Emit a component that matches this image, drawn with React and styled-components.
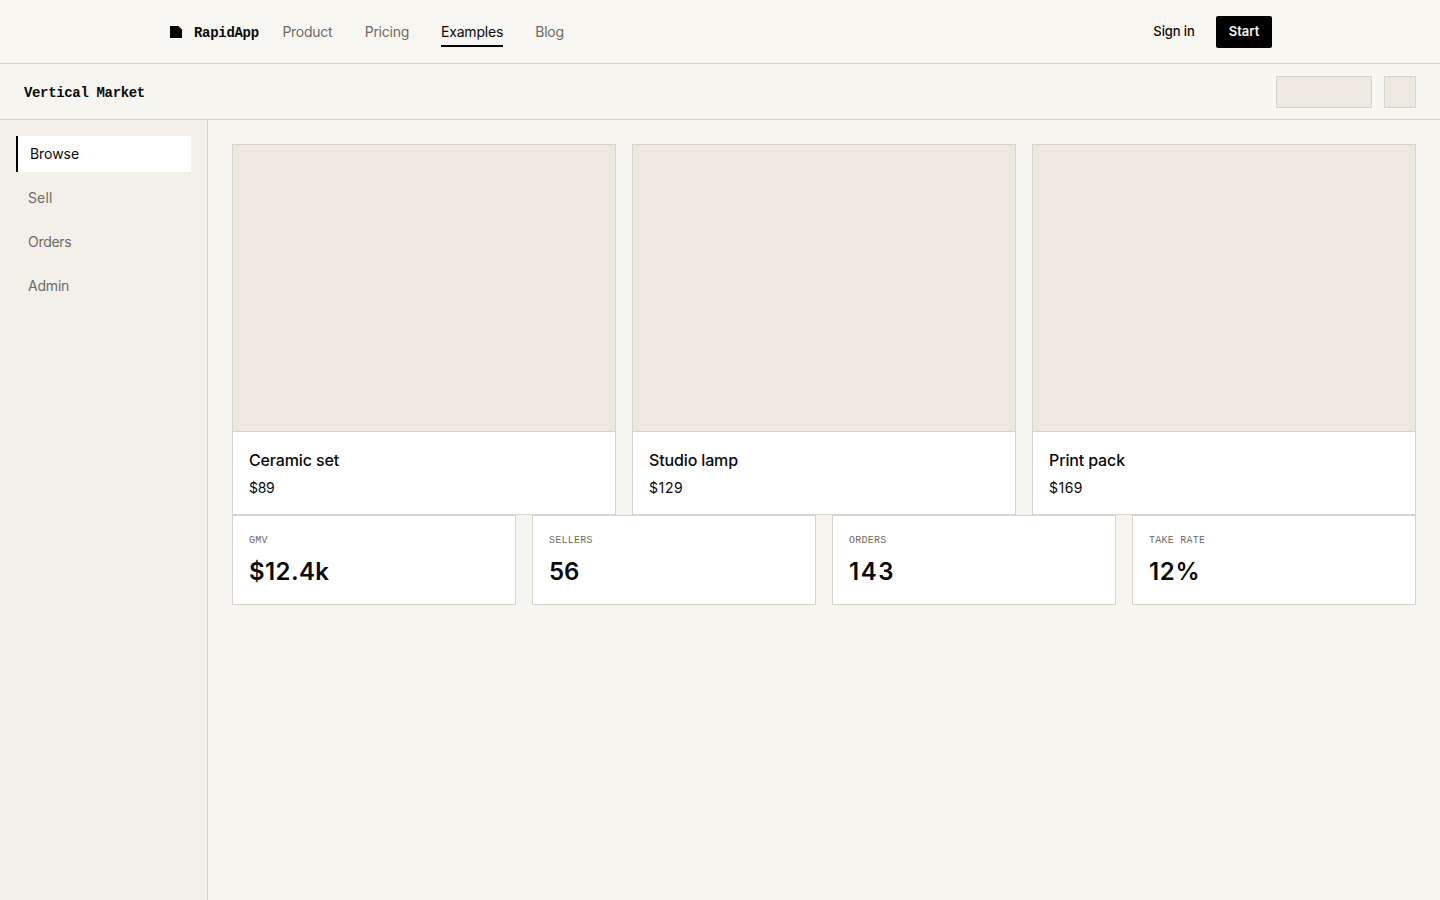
import React from "react";
import styled, { createGlobalStyle, css } from "styled-components";

const line = "#d6d3cb";
const ink = "#0a0a0a";
const muted = "#6e6b66";
const sans = '"Inter", "Liberation Sans", sans-serif';
const mono = '"Liberation Mono", "DejaVu Sans Mono", monospace';

const GlobalStyle = createGlobalStyle`
  *, *::before, *::after { box-sizing: border-box; }
  body {
    margin: 0;
    background: #f7f5ef;
    color: ${ink};
    font-family: ${sans};
    -webkit-font-smoothing: antialiased;
  }
`;

const tracked = css`
  letter-spacing: ${(p) => p.$track || 0}px;
`;

const Page = styled.div`
  display: flex;
  flex-direction: column;
  height: 100vh;
  overflow: hidden;
`;

const NavBar = styled.header`
  height: 64px;
  flex: none;
  border-bottom: 1px solid ${line};
  background: #f8f6f0;
`;

const NavInner = styled.div`
  width: 1104px;
  height: 64px;
  margin: 0 auto;
  display: flex;
  align-items: center;
`;

const Brand = styled.a`
  display: flex;
  align-items: center;
  gap: 10px;
  width: 114.4px;
  font: 700 14px/20px ${mono};
  letter-spacing: -0.3px;
`;

const BrandName = styled.span`
  padding-top: 2px;
`;

const NavLinks = styled.nav`
  display: flex;
  gap: 32px;
  flex: 1;
`;

const NavLink = styled.a`
  width: ${(p) => p.$width}px;
  height: 30px;
  padding-top: 1px;
  white-space: nowrap;
  font-size: 14px;
  line-height: 28px;
  ${tracked}
  color: ${(p) => (p.$active ? ink : muted)};
  border-bottom: 2px solid ${(p) => (p.$active ? "#000" : "transparent")};
`;

const Actions = styled.div`
  display: flex;
  gap: 8px;
`;

const Button = styled.button`
  width: ${(p) => p.$width}px;
  height: 32px;
  padding: 0 0 2px;
  border: 0;
  border-radius: 2px;
  background: transparent;
  color: ${ink};
  font: 500 13px/20px ${sans};
  ${tracked}
  ${(p) =>
    p.$primary &&
    css`
      background: #000;
      color: #f7f5ef;
      font-weight: 600;
    `}
`;

const AppBar = styled.div`
  height: 56px;
  flex: none;
  padding: 0 24px;
  display: flex;
  align-items: center;
  justify-content: space-between;
  border-bottom: 1px solid ${line};
`;

const AppTitle = styled.h1`
  margin: 0;
  padding-top: 2px;
  font: 700 14px/20px ${mono};
  letter-spacing: -0.34px;
`;

const Placeholders = styled.div`
  display: flex;
  gap: 12px;
`;

const Placeholder = styled.div`
  width: ${(p) => p.$width}px;
  height: 32px;
  background: #ede8e0;
  border: 1px solid ${line};
`;

const Body = styled.div`
  flex: 1;
  display: flex;
`;

const Sidebar = styled.aside`
  width: 208px;
  padding: 16px;
  display: flex;
  flex-direction: column;
  gap: 8px;
  background: #f3f0e9;
  border-right: 1px solid ${line};
`;

const SideItem = styled.a`
  height: 36px;
  padding: 0 12px;
  font-size: 14px;
  line-height: 36px;
  ${tracked}
  color: ${muted};
  ${(p) =>
    p.$active &&
    css`
      color: ${ink};
      background: #fff;
      border-left: 2px solid #000;
    `}
`;

const Main = styled.main`
  flex: 1;
  padding: 24px;
`;

const Grid = styled.div`
  display: grid;
  grid-template-columns: repeat(${(p) => p.$columns}, 1fr);
  gap: 16px;
`;

const Card = styled.article`
  background: #fff;
  border: 1px solid ${line};
`;

const CardImage = styled.div`
  height: 287px;
  background: #ede8e0;
  border-bottom: 1px solid ${line};
`;

const CardBody = styled.div`
  height: 82px;
  padding: 16px;
`;

const CardTitle = styled.h2`
  margin: 0 0 4px;
  font-size: 16px;
  font-weight: 500;
  line-height: 24px;
  letter-spacing: -0.14px;
`;

const Price = styled.div`
  font-size: 14px;
  line-height: 23px;
  ${tracked}
`;

const Stat = styled(Card)`
  height: 90px;
  padding: 16px;
`;

const StatLabel = styled.div`
  padding-top: 1px;
  font: 400 10px/16px ${mono};
  letter-spacing: 0.25px;
  text-transform: uppercase;
  color: ${muted};
`;

const StatValue = styled.div`
  margin-top: 7px;
  font-size: 24px;
  font-weight: 600;
  line-height: 32px;
  ${tracked}
`;

const links = [
  { label: "Product", width: 50.3, track: -0.25 },
  { label: "Pricing", width: 44.3, track: -0.25 },
  { label: "Examples", width: 62.2, track: -0.18, active: true },
  { label: "Blog", width: 30, track: -0.2 },
];
const sections = [
  { label: "Browse", track: -0.05, active: true },
  { label: "Sell", track: 0.12 },
  { label: "Orders", track: -0.3 },
  { label: "Admin", track: -0.2 },
];
const products = [
  { name: "Ceramic set", price: "$89", track: -0.3 },
  { name: "Studio lamp", price: "$129", track: 0.6 },
  { name: "Print pack", price: "$169", track: 0.5 },
];
const stats = [
  { label: "GMV", value: "$12.4k", track: 0.4 },
  { label: "Sellers", value: "56", track: 0 },
  { label: "Orders", value: "143", track: 1.6 },
  { label: "Take rate", value: "12%", track: 0.7 },
];

export default function App() {
  return (
    <Page>
      <GlobalStyle />
      <NavBar>
        <NavInner>
          <Brand>
            <svg width="16" height="16" viewBox="0 0 16 16" aria-hidden="true">
              <path d="M2 2h8.5l3.5 3.5V14H2z" fill="#000" />
            </svg>
            <BrandName>RapidApp</BrandName>
          </Brand>
          <NavLinks>
            {links.map((l) => (
              <NavLink key={l.label} $width={l.width} $track={l.track} $active={l.active}>
                {l.label}
              </NavLink>
            ))}
          </NavLinks>
          <Actions>
            <Button $width={68} $track={-0.12}>Sign in</Button>
            <Button $width={56} $primary>Start</Button>
          </Actions>
        </NavInner>
      </NavBar>
      <AppBar>
        <AppTitle>Vertical Market</AppTitle>
        <Placeholders>
          <Placeholder $width={96} />
          <Placeholder $width={32} />
        </Placeholders>
      </AppBar>
      <Body>
        <Sidebar>
          {sections.map((s) => (
            <SideItem key={s.label} $track={s.track} $active={s.active}>
              {s.label}
            </SideItem>
          ))}
        </Sidebar>
        <Main>
          <Grid $columns={3}>
            {products.map((p) => (
              <Card key={p.name}>
                <CardImage />
                <CardBody>
                  <CardTitle>{p.name}</CardTitle>
                  <Price $track={p.track}>{p.price}</Price>
                </CardBody>
              </Card>
            ))}
          </Grid>
          <Grid $columns={4}>
            {stats.map((s) => (
              <Stat key={s.label}>
                <StatLabel>{s.label}</StatLabel>
                <StatValue $track={s.track}>{s.value}</StatValue>
              </Stat>
            ))}
          </Grid>
        </Main>
      </Body>
    </Page>
  );
}
